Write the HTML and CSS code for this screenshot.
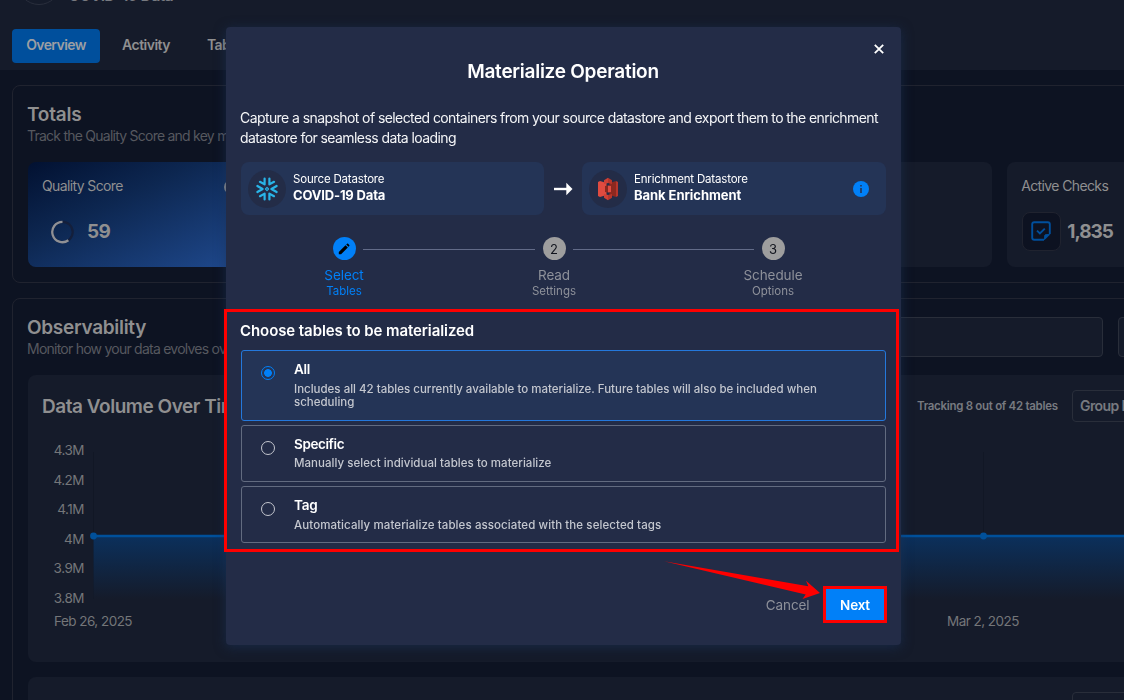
FILE: index.html
```html
<!DOCTYPE html>
<html lang="en">
<head>
<meta charset="utf-8">
<title>Materialize Operation</title>
<link rel="stylesheet" href="styles.css">
</head>
<body>
<div class="page">
  <header class="topbar">
    <div class="identity"><span class="avatar"></span><span class="store-name">COVID-19 Data</span></div>
    <nav class="tabs">
      <span class="tab tab-active">Overview</span>
      <span class="tab tab-activity">Activity</span>
      <span class="tab">Tables</span>
    </nav>
  </header>
  <main class="content">
    <section class="panel totals">
      <h2 class="panel-title">Totals</h2>
      <p class="panel-sub">Track the Quality Score and key metrics</p>
      <div class="stats">
        <div class="stat stat-score">
          <div class="stat-head"><span class="stat-label">Quality Score</span><span class="hint"></span></div>
          <div class="score-row">
            <svg class="ring" viewBox="0 0 24 24"><circle cx="12.5" cy="12" r="10.2" fill="none" stroke="#141f3b" stroke-width="2.2"/><path d="M12.5 1.8A10.2 10.2 0 1 0 18.4 20.3" fill="none" stroke="#8f9095" stroke-width="2.3"/></svg>
            <span class="number n-score">59</span>
          </div>
        </div>
        <div class="stat"></div>
        <div class="stat"></div>
        <div class="stat"></div>
        <div class="stat">
          <div class="stat-head"><span class="stat-label">Active Checks</span></div>
          <div class="check-row">
            <span class="check-box"><svg class="check-icon" viewBox="0 0 20 20" fill="none" stroke="#004f9c" stroke-width="1.9"><path d="M13 18.8H3.2Q1.2 18.8 1.2 16.8V3.2Q1.2 1.2 3.2 1.2H16.8Q18.8 1.2 18.8 3.2V13"/><path d="M13.6 18.6V15.2Q13.6 13.6 15.2 13.6H18.6Z" fill="#004f9c" stroke-width="1"/><path d="m6 9.6 2.9 2.9 4.9-4.9"/></svg></span>
            <span class="number n-checks">1,835</span>
          </div>
        </div>
      </div>
    </section>
    <section class="panel observability">
      <div class="obs-head">
        <div class="obs-text">
          <h2 class="panel-title t-obs">Observability</h2>
          <p class="panel-sub">Monitor how your data evolves over time</p>
        </div>
        <div class="field"></div>
        <div class="field field-small"></div>
      </div>
      <div class="chart-card">
        <div class="chart-head">
          <h3 class="chart-title">Data Volume Over Time</h3>
          <span class="tracking">Tracking 8 out of 42 tables</span>
          <span class="group">Group By</span>
        </div>
        <div class="chart">
          <div class="y-axis"><span>4.3M</span><span>4.2M</span><span>4.1M</span><span>4M</span><span>3.9M</span><span>3.8M</span></div>
          <svg class="plot" width="1040" height="150" viewBox="0 0 1040 150">
            <defs><linearGradient id="area" x1="0" y1="0" x2="0" y2="1"><stop offset="0" stop-color="#0b305c"/><stop offset="1" stop-color="#151b2a"/></linearGradient></defs>
            <path d="M4.5 1V148M894.5 1V148" stroke="#111725"/>
            <path d="M4.5 85H1040V148H4.5Z" fill="url(#area)"/>
            <path d="M4.5 85H1040" stroke="#00509a" stroke-width="2.4"/>
            <circle cx="4.5" cy="85" r="3.4" fill="#00509a"/><circle cx="894.5" cy="85" r="3.4" fill="#00509a"/>
          </svg>
        </div>
        <div class="x-axis"><span class="d-feb">Feb 26, 2025</span><span class="d-mar">Mar 2, 2025</span></div>
      </div>
      <div class="chart-card next-card"><span class="group"></span></div>
    </section>
  </main>
</div>

<div class="overlay">
  <div class="dialog">
    <svg class="close" viewBox="0 0 10 10"><path d="m.8.8 8.4 8.4M9.2.8.8 9.2" stroke="#fff" stroke-width="1.8"/></svg>
    <h1 class="dialog-title">Materialize Operation</h1>
    <p class="desc"><span>Capture a snapshot of selected containers from your source datastore and export them to the enrichment</span><br><span>datastore for seamless data loading</span></p>
    <div class="stores">
      <div class="store store-source">
        <span class="store-icon">
          <svg width="22" height="24" viewBox="0 0 22 24" fill="none" stroke="#29b5e8" stroke-width="2.2" stroke-linecap="round" stroke-linejoin="round">
            <path d="M8.6 1.6V7.4L4 4.8M13.4 1.6V7.4L18 4.8M8.6 22.4V16.6L4 19.2M13.4 22.4V16.6L18 19.2M1.4 9 6.6 12 1.4 15M20.6 9 15.4 12 20.6 15"/>
            <path d="m11 10.4 1.6 1.6-1.6 1.6L9.4 12Z" stroke-width="1.1"/>
          </svg>
        </span>
        <span class="store-text"><span class="store-kind">Source Datastore</span><b class="store-title">COVID-19 Data</b></span>
      </div>
      <svg class="arrow" viewBox="0 0 19 14"><path d="M0 7H13" stroke="#fff" stroke-width="2.4"/><path d="M12.3.8 18.5 7l-6.2 6.2Z" fill="#fff"/></svg>
      <div class="store">
        <span class="store-icon">
          <svg width="22" height="24" viewBox="0 0 22 24">
            <path d="M21 5 19 4V20L21 19Z" fill="#b6352c"/>
            <path d="M3 4 9.5 6V18L3 20Z" fill="#e04b40"/><path d="M19 4 12.5 6V18L19 20Z" fill="#8c281f"/>
            <path d="M1 5 3 4V20L1 19Z" fill="#e04b40"/>
            <path d="M7 3.2 11 .8V6L7 7ZM7 20.8 11 23.2V18L7 17Z" fill="#cf4035"/><path d="M15 3.2 11 .8V6L15 7ZM15 20.8 11 23.2V18L15 17Z" fill="#b6352c"/>
            <path d="M8 9 11 8.4V15.6L8 15Z" fill="#8c281f"/><path d="M14 9 11 8.4V15.6L14 15Z" fill="#e04b40"/>
          </svg>
        </span>
        <span class="store-text"><span class="store-kind">Enrichment Datastore</span><b class="store-title s-bank">Bank Enrichment</b></span>
        <svg class="info" viewBox="0 0 16 16"><circle cx="8" cy="8" r="8" fill="#0180f8"/><path d="M7.2 4h1.6v1.6H7.2ZM7.2 7h1.6v5H7.2Z" fill="#243456"/></svg>
      </div>
    </div>
    <div class="stepper">
      <div class="step step-on"><span class="dot"><svg width="12" height="12" viewBox="0 0 12 12"><path d="M.8 8.9 7.5 2.2 9.8 4.5 3.1 11.2H.8ZM8.2 1.5 9.1.7Q9.6.3 10.1.8L11.2 1.9Q11.7 2.4 11.3 2.9L10.5 3.8Z" fill="#000"/></svg></span><span class="step-name">Select</span><span class="step-sub">Tables</span></div>
      <span class="rule"></span>
      <div class="step"><span class="dot">2</span><span class="step-name">Read</span><span class="step-sub">Settings</span></div>
      <span class="rule rule-last"></span>
      <div class="step"><span class="dot">3</span><span class="step-name">Schedule</span><span class="step-sub">Options</span></div>
    </div>
    <h2 class="choose">Choose tables to be materialized</h2>
    <div class="options">
      <div class="option option-on"><span class="radio"></span><div class="option-text"><b class="o-name">All</b><p class="o-desc"><span>Includes all 42 tables currently available to materialize. Future tables will also be included when</span><br><span>scheduling</span></p></div></div>
      <div class="option"><span class="radio"></span><div class="option-text"><b class="o-name o-specific">Specific</b><p class="o-desc od-specific">Manually select individual tables to materialize</p></div></div>
      <div class="option"><span class="radio"></span><div class="option-text"><b class="o-name">Tag</b><p class="o-desc od-tag">Automatically materialize tables associated with the selected tags</p></div></div>
    </div>
    <div class="actions"><span class="cancel">Cancel</span><span class="next">Next</span></div>
  </div>
</div>

<span class="mark mark-options"></span>
<svg class="pointer" width="160" height="44" viewBox="0 0 160 44"><path d="M0 1.2 144.3 26.3 142 20.7 156 33 138.5 39 141.7 34.5Z" fill="#fe0000"/></svg>
</body>
</html>
```
FILE: styles.css
```css
* { box-sizing: border-box; }
body { margin: 0; width: 1124px; height: 700px; overflow: hidden; background: #0d1322; color: #8f8f90; font-family: Inter, "Liberation Sans", sans-serif; }
h1, h2, h3, p { margin: 0; }
span, h1, h2, h3, b { white-space: nowrap; }
svg { display: block; flex: none; }

.page { width: 1124px; height: 700px; overflow: hidden; }
.topbar { height: 70px; background: #151b2a; padding-left: 12px; }
.identity { display: flex; height: 29px; padding-left: 5px; }
.avatar { width: 44px; height: 44px; margin-top: -39px; border: 1px solid #292e3c; border-radius: 50%; }
.store-name { margin: -16px 0 0 7px; font-size: 16px; line-height: 22px; font-weight: 600; letter-spacing: -.8px; color: #777a80; }
.tabs { display: flex; height: 34px; font-size: 14px; font-weight: 600; line-height: 32px; letter-spacing: -.6px; }
.tab-active { width: 88px; margin-right: 22px; text-align: center; background: #004f9c; border-radius: 4px; color: #9b9ea3; }
.tab-activity { width: 85px; letter-spacing: -.5px; }

.content { width: 1400px; padding: 15px 12px; display: flex; flex-direction: column; gap: 15px; }
.panel { border: 1px solid #20232f; border-radius: 8px; padding: 0 15px; }
.totals { height: 198px; padding-top: 17px; }
.panel-title { margin-left: -1px; font-size: 19px; line-height: 24px; font-weight: 600; letter-spacing: -.2px; }
.t-obs { letter-spacing: -.3px; }
.panel-sub { margin: -1px 0 0 -1px; font-size: 14px; line-height: 20px; letter-spacing: -.76px; color: #56585f; white-space: nowrap; }
.stats { display: flex; gap: 15px; margin-top: 16px; }
.stat { flex: none; width: 229.8px; height: 105px; padding: 14px; border-radius: 8px; background: #151b2a; }
.stat-score { background: linear-gradient(155deg, #021131, #0d2751 38%, #204b91); }
.stat-head { display: flex; justify-content: space-between; height: 20px; }
.stat-label { font-size: 14px; line-height: 20px; letter-spacing: -.62px; }
.hint { width: 14px; height: 14px; margin: 4px 6px 0 0; border-radius: 50%; background: #8f8f90; }
.score-row { display: flex; align-items: center; gap: 14px; height: 24px; margin: 24px 0 0 8px; }
.ring { width: 24px; height: 24px; margin-top: -1px; }
.number { font-size: 19px; font-weight: 700; line-height: 24px; letter-spacing: -.6px; }
.n-score { margin-left: -1px; }
.n-checks { letter-spacing: -1px; }
.check-row { display: flex; align-items: center; gap: 6px; margin: 16px 0 0 1px; }
.check-box { width: 39px; height: 39px; display: grid; place-items: center; background: #0d1221; border: 1px solid #20232f; border-radius: 8px; }
.check-icon { width: 20px; height: 20px; margin: -1px 0 0 -1px; }

.observability { height: 460px; padding-top: 17px; flex: none; }
.obs-head { display: flex; height: 59px; }
.obs-text { width: 500px; flex: none; }
.field { width: 575px; height: 40px; flex: none; margin: 1px 15px 0 0; background: #151b2a; border: 1px solid #292e3a; border-radius: 4px; }
.field-small { width: 100px; }
.chart-card { height: 287px; padding: 15px; border-radius: 8px; background: #151b2a; overflow: hidden; }
.chart-head { display: flex; height: 32px; align-items: center; }
.chart-title { width: 875px; margin-left: -1px; font-size: 19px; font-weight: 600; letter-spacing: -.47px; }
.tracking { width: 155px; font-size: 11.5px; font-weight: 600; letter-spacing: -.3px; color: #777a80; }
.group { width: 130px; height: 32px; padding-left: 7px; line-height: 30px; border: 1px solid #292e3a; border-radius: 4px; font-size: 14px; font-weight: 600; letter-spacing: -.6px; color: #777a80; }
.chart { display: flex; gap: 5px; padding-top: 13px; color: #747679; }
.y-axis { width: 41px; display: flex; flex-direction: column; text-align: right; font-size: 13.5px; line-height: 29.6px; letter-spacing: -.5px; padding-top: 1px; height: 166px; }
.plot { margin-top: 16px; }
.x-axis { display: flex; padding-left: 11px; margin-top: 10px; font-size: 13.5px; line-height: 20px; letter-spacing: -.53px; color: #747679; }
.d-feb { width: 893px; }
.next-card { margin-top: 15px; display: flex; padding-left: 1044px; }

.overlay { position: fixed; inset: 0; padding: 27px 0 0 226px; }
.dialog { position: relative; width: 675px; height: 618px; padding: 33px 15px 0; background: #232c47; border-radius: 4px; box-shadow: 0 2px 12px rgba(25, 50, 90, .6); color: #fff; }
.close { position: absolute; right: 17px; top: 17px; width: 10px; height: 10px; }
.dialog-title { font-size: 19px; line-height: 24px; font-weight: 600; letter-spacing: -.26px; text-align: center; margin-right: 1px; }
.desc { margin: 24px 0 0 -1px; height: 54px; font-size: 14px; line-height: 20px; color: #f4f5f7; letter-spacing: -.58px; }
.stores { display: flex; align-items: center; justify-content: space-between; }
.store { display: flex; align-items: center; width: 304px; height: 53px; padding: 0 17px 0 7px; background: #243456; border-radius: 8px; }
.store-source { width: 303px; }
.store-icon { width: 38px; height: 38px; border-radius: 50%; background: #232c47; display: grid; place-items: center; }
.store-text { display: flex; flex-direction: column; flex: 1; margin: -2px 0 0 7px; }
.store-kind { font-size: 11.5px; line-height: 16px; letter-spacing: -.18px; }
.store-title { font-size: 13px; line-height: 17px; letter-spacing: -.17px; }
.s-bank { letter-spacing: -.05px; }
.arrow { width: 19px; height: 14px; }
.info { width: 16px; height: 16px; }
.stepper { display: flex; height: 64px; margin-top: 22px; padding-left: 64px; }
.step { display: flex; flex-direction: column; align-items: center; width: 78px; color: #8e919a; }
.step-on { color: #0180f8; }
.dot { width: 23px; height: 23px; margin-bottom: 6px; border-radius: 50%; background: #9e9e9e; color: #10131c; font-size: 13px; display: grid; place-items: center; }
.step-on .dot { background: #0180f8; }
.step-name { font-size: 13.5px; line-height: 18px; letter-spacing: -.08px; }
.step-sub { font-size: 11.5px; line-height: 14px; }
.rule { width: 172px; height: 1px; margin: 12px -20px 0; background: #626b88; }
.rule-last { width: 181px; }
.choose { margin: 20px 0 0 -1px; font-size: 15px; line-height: 20px; font-weight: 600; letter-spacing: -.08px; }
.options { display: flex; flex-direction: column; gap: 4px; margin-top: 9px; }
.option { display: flex; height: 57px; padding: 9px 19px; border: 1px solid #626b80; border-radius: 3px; }
.option-on { height: 71px; background: #243456; border-color: #2478dc; }
.radio { width: 14px; height: 14px; margin: 6px 19px 0 0; border: 1px solid #c3c6ce; border-radius: 50%; }
.option-on .radio { border-color: #0180f8; background: radial-gradient(circle, #0180f8 3.5px, transparent 4.2px); }
.o-name { display: block; font-size: 13.5px; line-height: 18px; font-weight: 600; letter-spacing: -.25px; }
.o-specific { letter-spacing: -.4px; }
.o-desc { margin-top: 5px; font-size: 11.5px; line-height: 13px; font-weight: 500; color: #c4c7cf; }
.od-specific { margin-top: 4px; letter-spacing: .04px; }
.od-tag { letter-spacing: .09px; }
.actions { display: flex; justify-content: flex-end; align-items: center; gap: 13.5px; margin: 43px -1px 0 0; }
.cancel { font-size: 13.5px; letter-spacing: -.1px; color: #8e919a; }
.next { width: 64px; height: 37px; border: 3px solid #fe0000; background: #0180f8; font-size: 13.5px; line-height: 32px; font-weight: 600; letter-spacing: -.2px; text-align: center; }

.mark { position: absolute; border: 3px solid #fe0000; }
.mark-options { left: 224px; top: 309px; width: 675px; height: 243px; }
.pointer { position: absolute; left: 664px; top: 560px; }
```
